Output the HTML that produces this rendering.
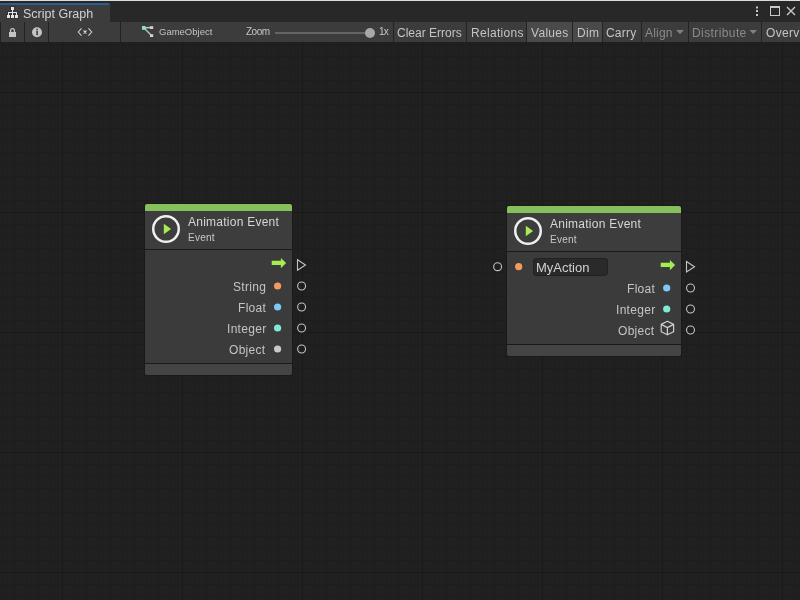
<!DOCTYPE html>
<html><head><meta charset="utf-8">
<style>
*{margin:0;padding:0;box-sizing:border-box}
html,body{width:800px;height:600px;overflow:hidden;background:#202020;font-family:"Liberation Sans",sans-serif}
.abs{position:absolute}
#topline{left:0;top:0;width:800px;height:1px;background:#dcdcdc}
#tabstrip{left:0;top:1px;width:800px;height:21px;background:#282828}
#tab{left:0;top:3px;width:110px;height:19px;background:#3c3c3c;border-top:2px solid #2c5d8c;border-top-right-radius:2px}
#toolbar{left:0;top:22px;width:800px;height:20px;background:#3c3c3c}
.sep{position:absolute;top:22px;width:1px;height:20px;background:#232323}
#canvas{left:0;top:42px;width:800px;height:558px;background-color:#202020;
 background-image:
  linear-gradient(90deg,#191919 1px,transparent 1px),
  linear-gradient(180deg,#191919 1px,transparent 1px),
  linear-gradient(90deg,#1d1d1d 1px,transparent 1px),
  linear-gradient(180deg,#1d1d1d 1px,transparent 1px);
 background-size:120px 120px,120px 120px,12px 12px,12px 12px;
 background-position:62px 50px,62px 50px,2px 2px,2px 2px;
}
.t{position:absolute;white-space:nowrap;color:#c4c4c4;line-height:1;will-change:transform}
.btn{position:absolute;top:22px;height:20px}
.node{position:absolute;background:#1a1a1a;border-radius:3px}
.ni{position:absolute}
</style></head><body>
<div id="topline" class="abs"></div>
<div id="tabstrip" class="abs"></div>
<div id="tab" class="abs"></div>
<div class="t" style="left:23px;top:8px;font-size:12.5px;color:#d2d2d2">Script Graph</div>
<div id="toolbar" class="abs"></div>
<div id="canvas" class="abs"></div>
<div class="sep" style="left:0"></div>
<div class="sep" style="left:24px"></div>
<div class="sep" style="left:48px"></div>
<div class="sep" style="left:120px"></div>
<div class="sep" style="left:393px"></div>
<div class="sep" style="left:466px"></div>
<div class="sep" style="left:526px"></div>
<div class="btn" style="left:527px;width:45px;background:#4a4a4a"></div>
<div class="sep" style="left:572px"></div>
<div class="btn" style="left:573px;width:29px;background:#4a4a4a"></div>
<div class="sep" style="left:602px"></div>
<div class="sep" style="left:641px"></div>
<div class="sep" style="left:688px"></div>
<div class="sep" style="left:761px"></div>
<div class="t" style="left:159px;top:27px;font-size:9.5px">GameObject</div>
<div class="t" style="left:246px;top:26.5px;font-size:10px;letter-spacing:-0.5px">Zoom</div>
<div class="abs" style="left:275px;top:32px;width:92px;height:2px;background:#646464"></div>
<div class="abs" style="left:365px;top:28px;width:10px;height:10px;border-radius:50%;background:#a8a8a8"></div>
<div class="t" style="left:378.5px;top:26.5px;font-size:10px;letter-spacing:-0.9px">1x</div>
<div class="t" style="left:397px;top:27px;font-size:12px">Clear Errors</div>
<div class="t" style="left:471px;top:27px;font-size:12px;letter-spacing:0.3px">Relations</div>
<div class="t" style="left:531px;top:27px;font-size:12px;letter-spacing:0.3px">Values</div>
<div class="t" style="left:577px;top:27px;font-size:12px;letter-spacing:0.3px">Dim</div>
<div class="t" style="left:606px;top:27px;font-size:12px;letter-spacing:0.2px">Carry</div>
<div class="t" style="left:645px;top:27px;font-size:12px;letter-spacing:0.2px;color:#8a8a8a">Align</div>
<div class="t" style="left:692px;top:27px;font-size:12px;letter-spacing:0.4px;color:#8a8a8a">Distribute</div>
<div class="t" style="left:766px;top:27px;font-size:12px;letter-spacing:0.3px">Overview</div>

<!-- node 1 -->
<div class="node" style="left:144px;top:203px;width:149px;height:173px"></div>
<div class="ni" style="left:145px;top:204px;width:147px;height:7px;background:#86c05a;border-radius:2px 2px 0 0"></div>
<div class="ni" style="left:145px;top:211px;width:147px;height:38px;background:#3d3d3d"></div>
<div class="ni" style="left:145px;top:250px;width:147px;height:113px;background:#3b3b3b"></div>
<div class="ni" style="left:145px;top:364px;width:147px;height:11px;background:#444;border-radius:0 0 2px 2px"></div>
<div class="t" style="left:188px;top:216px;font-size:12px;letter-spacing:0.25px;color:#d6d6d6">Animation Event</div>
<div class="t" style="left:188px;top:232.5px;font-size:10px;letter-spacing:0.25px;color:#c8c8c8">Event</div>

<!-- node 2 -->
<div class="node" style="left:506px;top:205px;width:176px;height:152px"></div>
<div class="ni" style="left:507px;top:206px;width:174px;height:7px;background:#86c05a;border-radius:2px 2px 0 0"></div>
<div class="ni" style="left:507px;top:213px;width:174px;height:38px;background:#3d3d3d"></div>
<div class="ni" style="left:507px;top:252px;width:174px;height:92px;background:#3b3b3b"></div>
<div class="ni" style="left:507px;top:345px;width:174px;height:11px;background:#444;border-radius:0 0 2px 2px"></div>
<div class="t" style="left:550px;top:218px;font-size:12px;letter-spacing:0.25px;color:#d6d6d6">Animation Event</div>
<div class="t" style="left:550px;top:234.5px;font-size:10px;letter-spacing:0.25px;color:#c8c8c8">Event</div>

<div class="t" style="left:233px;top:281px;font-size:12px;letter-spacing:0.3px">String</div>
<div class="t" style="left:238px;top:302px;font-size:12px;letter-spacing:0.3px">Float</div>
<div class="t" style="left:227px;top:323px;font-size:12px;letter-spacing:0.3px">Integer</div>
<div class="t" style="left:229px;top:344px;font-size:12px;letter-spacing:0.3px">Object</div>
<div class="abs" style="left:533px;top:258px;width:75px;height:18px;background:#2a2a2a;border:1px solid #222;border-radius:3px"></div>
<div class="t" style="left:536px;top:261px;font-size:13px;letter-spacing:0;color:#d2d2d2">MyAction</div>
<div class="t" style="left:627px;top:283px;font-size:12px;letter-spacing:0.3px">Float</div>
<div class="t" style="left:616px;top:304px;font-size:12px;letter-spacing:0.3px">Integer</div>
<div class="t" style="left:618px;top:325px;font-size:12px;letter-spacing:0.3px">Object</div>

<svg class="abs" style="left:0;top:0" width="800" height="600" viewBox="0 0 800 600">
<!-- tab hierarchy icon -->
<g shape-rendering="crispEdges">
<g fill="#333333">
<rect x="10" y="6" width="5" height="5"/><rect x="6" y="14" width="5" height="5"/><rect x="10" y="14" width="5" height="5"/><rect x="14" y="14" width="5" height="5"/>
<rect x="7" y="11" width="11" height="3"/><rect x="11" y="10" width="3" height="2"/>
</g>
<g fill="#e4e4e4">
<rect x="11" y="7" width="3" height="3"/><rect x="12" y="10" width="1" height="5"/><rect x="8" y="12" width="9" height="1"/>
<rect x="8" y="13" width="1" height="2"/><rect x="16" y="13" width="1" height="2"/>
<rect x="7" y="15" width="3" height="3"/><rect x="11" y="15" width="3" height="3"/><rect x="15" y="15" width="3" height="3"/>
</g>
</g>
<!-- window controls -->
<g fill="#c8c8c8">
<rect x="756" y="6.5" width="2" height="2"/><rect x="756" y="10" width="2" height="2"/><rect x="756" y="14" width="2" height="2"/>
</g>
<rect x="770.5" y="6.5" width="9" height="9" fill="none" stroke="#c8c8c8" stroke-width="1"/>
<rect x="770" y="6" width="10" height="2" fill="#c8c8c8"/>
<path d="M787 7 L795 15 M795 7 L787 15" stroke="#c8c8c8" stroke-width="1.4"/>
<!-- lock -->
<rect x="9" y="32" width="7" height="5" fill="#c4c4c4"/>
<path d="M10.6 32.5 V30.5 A1.9 1.9 0 0 1 14.4 30.5 V32.5" fill="none" stroke="#c4c4c4" stroke-width="1.3"/>
<!-- info -->
<circle cx="37" cy="32.2" r="5" fill="#c4c4c4"/>
<rect x="36.3" y="28.8" width="1.6" height="1.5" fill="#3c3c3c"/>
<rect x="36.3" y="31" width="1.6" height="4.2" fill="#3c3c3c"/>
<!-- <x> -->
<g stroke="#d0d0d0" stroke-width="1.1" fill="none">
<path d="M81.5 28.3 L78.3 32 L81.5 35.7"/>
<path d="M88.5 28.3 L91.7 32 L88.5 35.7"/>
<path d="M83.5 30.5 L86.5 33.5 M86.5 30.5 L83.5 33.5"/>
</g>
<rect x="84.2" y="31.2" width="1.6" height="1.6" fill="#e0e0e0"/>
<!-- gameobject icon -->
<path d="M144 28 L150.5 27.5 M144.5 28.5 L151.5 35.5" stroke="#b8c8c4" stroke-width="1.4" fill="none"/>
<rect x="142" y="26" width="3.6" height="3.8" fill="#7ee8d4"/>
<rect x="150" y="26.2" width="3.2" height="2.8" fill="#d0d0d0"/>
<rect x="150" y="34.2" width="3.2" height="2.8" fill="#d0d0d0"/>
<!-- dropdown arrows -->
<path d="M676 30 L684 30 L680 34 Z" fill="#808080"/>
<path d="M749.4 30 L757 30 L753.2 34 Z" fill="#808080"/>

<!-- node1 icons -->
<circle cx="166" cy="229" r="12.75" fill="none" stroke="#f0f0f0" stroke-width="2.5"/>
<path d="M163.8 223.8 L171.1 229 L163.8 234.2 Z" fill="#a6ee50"/>
<path d="M271.7 260.8 H280.9 V257.9 L286.1 263 L280.9 268.2 V265.1 H271.7 Z" fill="#a6ee50"/>
<path d="M297.5 259.8 L305.5 265 L297.5 270.2 Z" fill="none" stroke="#c4c4c4" stroke-width="1.1" stroke-linejoin="miter"/>
<g fill="none" stroke="#c4c4c4" stroke-width="1.1">
<circle cx="301.6" cy="286" r="3.95"/><circle cx="301.6" cy="307" r="3.95"/><circle cx="301.6" cy="328" r="3.95"/><circle cx="301.6" cy="349" r="3.95"/>
</g>
<circle cx="277.6" cy="286" r="3.6" fill="#f39a5c"/>
<circle cx="277.6" cy="307" r="3.6" fill="#7ec8f6"/>
<circle cx="277.6" cy="328" r="3.6" fill="#7eead8"/>
<circle cx="277.6" cy="349" r="3.6" fill="#c8c8c8"/>

<!-- node2 icons -->
<circle cx="528" cy="231" r="12.75" fill="none" stroke="#f0f0f0" stroke-width="2.5"/>
<path d="M525.8 225.8 L533.1 231 L525.8 236.2 Z" fill="#a6ee50"/>
<path d="M660.7 262.8 H669.9 V259.9 L675.1 265 L669.9 270.2 V267.1 H660.7 Z" fill="#a6ee50"/>
<path d="M686.5 261.5 L694.5 266.7 L686.5 271.9 Z" fill="none" stroke="#c4c4c4" stroke-width="1.1"/>
<g fill="none" stroke="#c4c4c4" stroke-width="1.1">
<circle cx="497.6" cy="266.7" r="3.95"/>
<circle cx="690.5" cy="288" r="3.95"/><circle cx="690.5" cy="309" r="3.95"/><circle cx="690.5" cy="330" r="3.95"/>
</g>
<circle cx="518.7" cy="266.7" r="3.6" fill="#f39a5c"/>
<circle cx="666.7" cy="288" r="3.6" fill="#7ec8f6"/>
<circle cx="666.7" cy="309" r="3.6" fill="#7eead8"/>
<path d="M667.4 321.3 L673.6 324.4 L673.6 331.8 L667.4 334.8 L661.2 331.8 L661.2 324.4 Z M661.2 324.4 L667.4 327.6 L673.6 324.4 M667.4 327.6 V334.8" fill="none" stroke="#d0d0d0" stroke-width="1.2" stroke-linejoin="round"/>
</svg>
</body></html>
